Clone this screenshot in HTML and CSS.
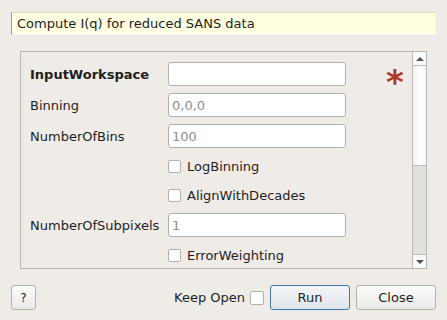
FILE: index.html
```html
<!DOCTYPE html>
<html>
<head>
<meta charset="utf-8">
<link rel="stylesheet" href="styles.css">
</head>
<body>
<div class="dialog">
  <div class="desc">Compute I(q) for reduced SANS data</div>
  <div class="scroll">
    <div class="content">
      <div class="form">
        <div class="label bold">InputWorkspace</div>
        <div class="field"><input class="text" type="text"></div>
        <div class="star">*</div>

        <div class="label">Binning</div>
        <div class="field"><input class="text" type="text" placeholder="0,0,0"></div>
        <div></div>

        <div class="label">NumberOfBins</div>
        <div class="field"><input class="text" type="text" placeholder="100"></div>
        <div></div>

        <div class="label"></div>
        <div class="field cbrow"><span class="cb"></span><span>LogBinning</span></div>
        <div></div>

        <div class="label"></div>
        <div class="field cbrow"><span class="cb"></span><span>AlignWithDecades</span></div>
        <div></div>

        <div class="label">NumberOfSubpixels</div>
        <div class="field"><input class="text" type="text" placeholder="1"></div>
        <div></div>

        <div class="label"></div>
        <div class="field cbrow"><span class="cb"></span><span>ErrorWeighting</span></div>
        <div></div>
      </div>
    </div>
    <div class="vbar">
      <div class="arrow up"><span class="tri-up"></span></div>
      <div class="handle"></div>
      <div class="groove"></div>
      <div class="arrow down"><span class="tri-down"></span></div>
    </div>
  </div>
  <div class="footer">
    <button class="btn help">?</button>
    <div class="spacer"></div>
    <span class="keep">Keep Open</span>
    <span class="cb keepcb"></span>
    <button class="btn run">Run</button>
    <button class="btn close">Close</button>
  </div>
</div>
</body>
</html>
```

FILE: styles.css
```css
* { box-sizing: border-box; }
html, body {
  margin: 0;
  padding: 0;
  background: #efebe7;
  width: 447px;
  height: 320px;
  overflow: hidden;
  font-family: "DejaVu Sans", sans-serif;
  font-size: 13px;
  color: #1e1e1e;
}
.dialog {
  display: flex;
  flex-direction: column;
}
.desc {
  margin: 12px 11px 0 11px;
  height: 23px;
  line-height: 22px;
  background: #ffffe1;
  border-left: 1px solid #9e9a94;
  border-top: 1px solid #d8d5cf;
  border-right: 1px solid #f6f4f2;
  border-bottom: 1px solid #f6f4f2;
  padding-left: 5px;
}
.scroll {
  margin: 16px 0 0 20px;
  width: 407px;
  height: 218px;
  display: flex;
  border: 1px solid #b9b5b0;
  border-right: none;
}
.content {
  flex: 1;
  padding: 10px 0 0 9px;
  overflow: hidden;
}
.form {
  display: grid;
  grid-template-columns: 138px 178px 50px;
  grid-auto-rows: auto;
  row-gap: 7px;
  align-items: center;
}
.label {
  white-space: nowrap;
}
.bold { font-weight: bold; }
.field {
  height: 24px;
  display: flex;
  align-items: center;
}
.cbrow {
  height: 22px;
  gap: 6px;
}
.text {
  width: 178px;
  height: 24px;
  border: 1px solid #b4b0aa;
  border-radius: 3px;
  background: #fff;
  font-family: "DejaVu Sans", sans-serif;
  font-size: 13px;
  padding: 0 3px;
  color: #1e1e1e;
  outline: none;
}
.text::placeholder { color: #8f8f8f; }
.cb {
  display: inline-block;
  width: 13px;
  height: 13px;
  border: 1px solid #b4b0aa;
  border-radius: 2px;
  background: #fff;
  flex: none;
}
.star {
  color: #b2372b;
  font-weight: bold;
  font-size: 34px;
  line-height: 24px;
  padding-left: 40px;
  height: 24px;
  padding-top: 8px;
  overflow: visible;
}
.vbar {
  width: 15px;
  display: flex;
  flex-direction: column;
  border-left: 1px solid #bdb9b4;
  border-right: 1px solid #bdb9b4;
  background: #e2e0dd;
}
.arrow {
  height: 14px;
  background: #fafafa;
  display: flex;
  align-items: center;
  justify-content: center;
  flex: none;
}
.arrow.up { border-bottom: 1px solid #bdb9b4; }
.arrow.down { border-top: 1px solid #bdb9b4; }
.tri-up {
  width: 0; height: 0;
  border-left: 4px solid transparent;
  border-right: 4px solid transparent;
  border-bottom: 4px solid #555;
}
.tri-down {
  width: 0; height: 0;
  border-left: 4px solid transparent;
  border-right: 4px solid transparent;
  border-top: 4px solid #555;
}
.handle {
  height: 100px;
  background: linear-gradient(to right, #f2f2f2, #ffffff 60%, #f6f6f6);
  border-bottom: 1px solid #bdb9b4;
  flex: none;
}
.groove { flex: 1; }
.footer {
  display: flex;
  align-items: center;
  margin: 16px 11px 0 11px;
  height: 25px;
}
.spacer { flex: 1; }
.btn {
  height: 25px;
  border: 1px solid #b4b0aa;
  border-radius: 3px;
  background: linear-gradient(#fbfbfa, #ebe9e6);
  font-family: "DejaVu Sans", sans-serif;
  font-size: 13px;
  color: #1e1e1e;
  padding: 0;
}
.help { width: 25px; font-size: 12px; }
.keep { margin-right: 5px; }
.keepcb { width: 14px; height: 14px; margin-right: 6px; }
.run {
  width: 80px;
  border-color: #3a7ab0;
  background: linear-gradient(#f3f5f7, #e1e5e9);
  margin-right: 6px;
}
.close { width: 80px; }
```
